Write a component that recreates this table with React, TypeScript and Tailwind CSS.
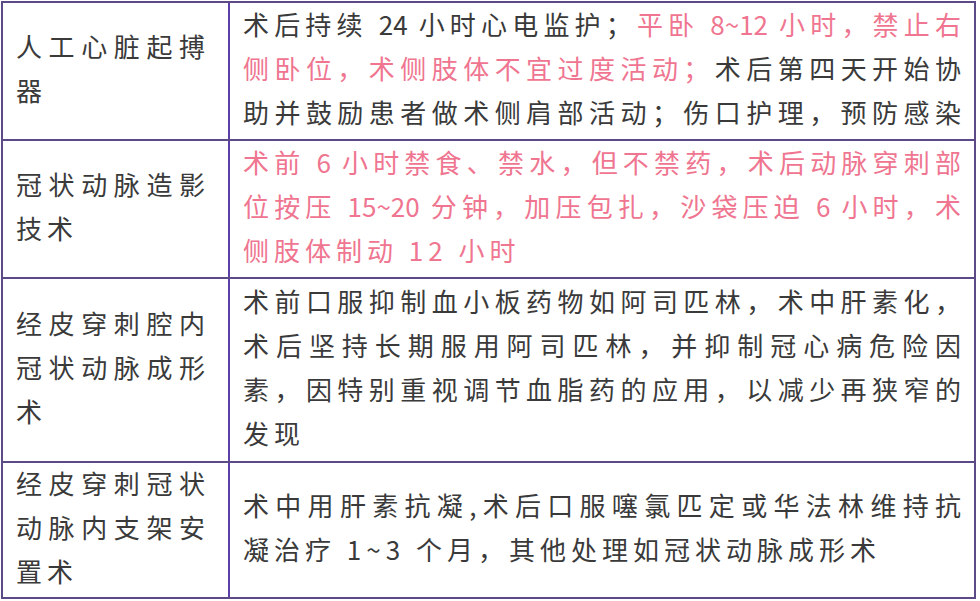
const PINK = "text-[#ef7590]";

type Seg = { t: string; pink?: boolean };
type Line = { segs: Seg[]; full?: boolean };

const dark = (t: string): Seg => ({ t });
const pink = (t: string): Seg => ({ t, pink: true });

const rows: { height: string; left: Line[]; right: Line[] }[] = [
	{
		height: "h-[138px]",
		left: [{ segs: [dark("人工心脏起搏")], full: true }, { segs: [dark("器")] }],
		right: [
			{ segs: [dark("术后持续 24 小时心电监护；"), pink("平卧 8~12 小时，禁止右")], full: true },
			{ segs: [pink("侧卧位，术侧肢体不宜过度活动；"), dark("术后第四天开始协")], full: true },
			{ segs: [dark("助并鼓励患者做术侧肩部活动；伤口护理，预防感染")], full: true },
		],
	},
	{
		height: "h-[138px]",
		left: [{ segs: [dark("冠状动脉造影")], full: true }, { segs: [dark("技术")] }],
		right: [
			{ segs: [pink("术前 6 小时禁食、禁水，但不禁药，术后动脉穿刺部")], full: true },
			{ segs: [pink("位按压 15~20 分钟，加压包扎，沙袋压迫 6 小时，术")], full: true },
			{ segs: [pink("侧肢体制动 12 小时")] },
		],
	},
	{
		height: "h-[184px]",
		left: [
			{ segs: [dark("经皮穿刺腔内")], full: true },
			{ segs: [dark("冠状动脉成形")], full: true },
			{ segs: [dark("术")] },
		],
		right: [
			{ segs: [dark("术前口服抑制血小板药物如阿司匹林，术中肝素化，")], full: true },
			{ segs: [dark("术后坚持长期服用阿司匹林，并抑制冠心病危险因")], full: true },
			{ segs: [dark("素，因特别重视调节血脂药的应用，以减少再狭窄的")], full: true },
			{ segs: [dark("发现")] },
		],
	},
	{
		height: "h-[134px]",
		left: [
			{ segs: [dark("经皮穿刺冠状")], full: true },
			{ segs: [dark("动脉内支架安")], full: true },
			{ segs: [dark("置术")] },
		],
		right: [
			{ segs: [dark("术中用肝素抗凝,术后口服噻氯匹定或华法林维持抗")], full: true },
			{ segs: [dark("凝治疗 1~3 个月，其他处理如冠状动脉成形术")] },
		],
	},
];

// 行ごとに明示的に改行、満行は両端揃え
const TextLines = ({ lines }: { lines: Line[] }) => (
	<div className="flex flex-col">
		{lines.map((line, i) => (
			<div
				key={i}
				className={
					"h-[44px] leading-[44px] whitespace-nowrap " +
					(line.full
						? "tracking-normal text-justify [text-align-last:justify]"
						: "tracking-[5px] text-left")
				}
			>
				{line.segs.map((s, j) => (
					<span key={j} className={s.pink ? PINK : "text-[#3a3a3a]"}>
						{s.t}
					</span>
				))}
			</div>
		))}
	</div>
);

export default function App() {
	return (
		<div className="w-[980px] h-[601px] bg-white pt-[1px] pl-[1px]">
			<div
				className="w-[975px] border-2 border-[#5b4a86] text-[26px]"
				style={{ fontFamily: '"Noto Sans CJK SC", "Noto Sans", sans-serif' }}
			>
				{rows.map((row, i) => (
					<div
						key={i}
						className={
							"flex " + row.height + (i < rows.length - 1 ? " border-b-2 border-[#5b4a86]" : "")
						}
					>
						<div className="w-[227px] shrink-0 border-r-2 border-[#5a3fa6] flex items-center pl-[13px] pr-[23px] pb-[7px]">
							<div className="w-full">
								<TextLines lines={row.left} />
							</div>
						</div>
						<div className="flex-1 min-w-0 flex items-center pl-[13px] pr-[13px] pb-[7px]">
							<div className="w-full">
								<TextLines lines={row.right} />
							</div>
						</div>
					</div>
				))}
			</div>
		</div>
	);
}
